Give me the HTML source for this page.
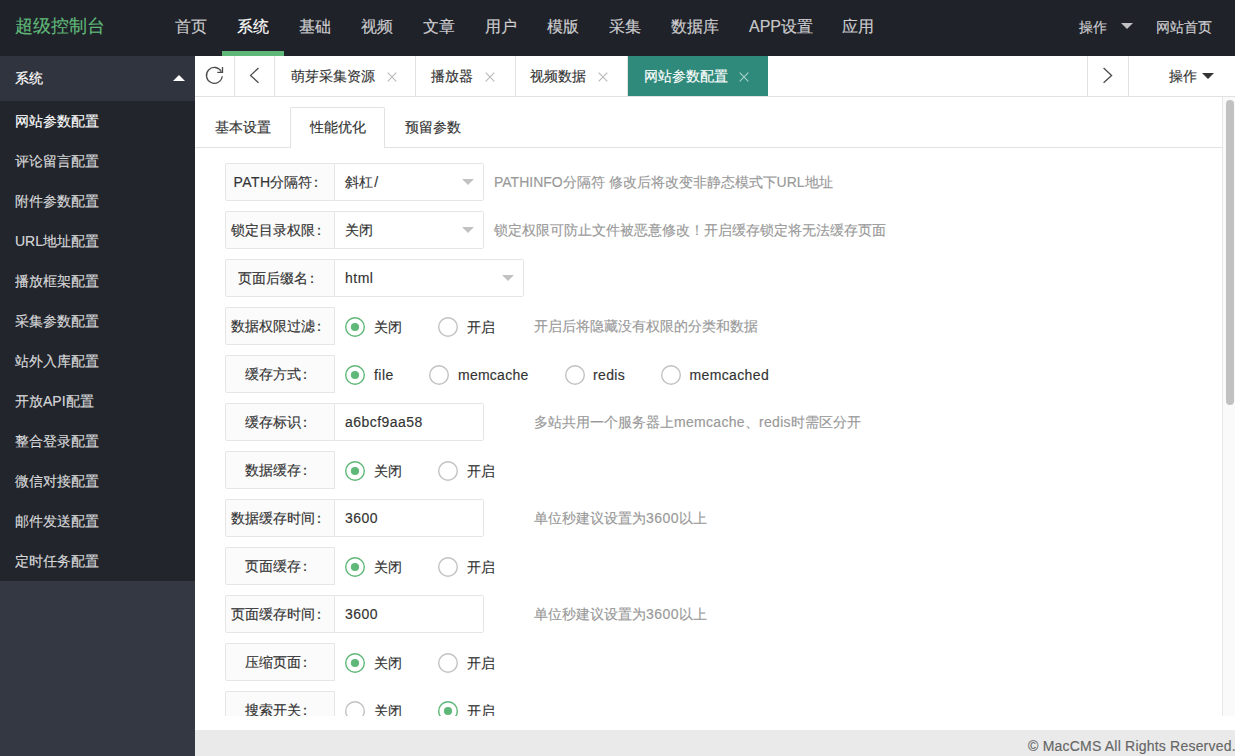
<!DOCTYPE html>
<html><head><meta charset="utf-8">
<style>
*{margin:0;padding:0;box-sizing:border-box}
html,body{width:1235px;height:756px;overflow:hidden;background:#fff;font-family:"Liberation Sans",sans-serif;font-size:14px;color:#333;-webkit-text-stroke:0.15px currentColor}
.hdr{position:absolute;left:0;top:0;width:1235px;height:56px;background:#20222a}
.logo{position:absolute;left:15px;top:0;line-height:52px;font-size:18px;color:#5fb878;white-space:nowrap}
.nav a{position:absolute;top:1px;line-height:52px;font-size:16px;color:rgba(255,255,255,.75);text-decoration:none;white-space:nowrap}
.nav a.on{color:#fff}
.nav a.sm{font-size:14px}
.navbar{position:absolute;left:222px;top:51px;width:62px;height:5px;background:#5fb878}
.htri{position:absolute;left:1121px;top:23px;width:0;height:0;border-left:6px solid transparent;border-right:6px solid transparent;border-top:6px solid rgba(255,255,255,.72)}
.side{position:absolute;left:0;top:56px;width:195px;height:700px;background:#343843}
.side .tit{position:absolute;left:0;top:0;width:195px;height:45px;background:#30343e;color:#fff;line-height:45px;padding-left:15px;font-size:14px}
.side .tit i{position:absolute;left:173px;top:19px;width:0;height:0;border-left:6px solid transparent;border-right:6px solid transparent;border-bottom:6px solid #fff}
.side .list{position:absolute;left:0;top:45px;width:195px;height:480px;background:#22252c}
.side .list div{height:40px;line-height:40px;padding-left:15px;color:rgba(255,255,255,.8);white-space:nowrap}
.side .list div.on{color:#fff}
.tabs{position:absolute;left:195px;top:56px;width:1040px;height:41px;background:#fff;border-bottom:1px solid #e2e2e2}
.tabs .b{position:absolute;top:0;height:40px;border-right:1px solid #e2e2e2}
.tabs .t{position:absolute;top:0;line-height:40px;white-space:nowrap;color:#333}
.tabs .x{position:absolute;top:0;line-height:40px;color:#c2c2c2}
.tabs svg{position:absolute}
.body{position:absolute;left:195px;top:97px;width:1040px;height:633px;background:#fff;overflow:hidden}
.frame{position:absolute;left:0;top:0;width:1040px;height:619px;overflow:hidden;background:#fff}
.ctab{position:absolute;left:0;top:10px;width:1027px;height:41px;border-bottom:1px solid #e2e2e2}
.ctab span{position:absolute;top:0;line-height:40px;white-space:nowrap;color:#333}
.ctab .act{position:absolute;left:95px;top:0;width:95px;height:41px;border:1px solid #e2e2e2;border-bottom:none;background:#fff;border-radius:2px 2px 0 0}
.lab{position:absolute;left:30px;width:110px;height:38px;border:1px solid #e6e6e6;background:#fbfbfb;border-radius:2px 0 0 2px;line-height:36px;text-align:center;white-space:nowrap;color:#333;letter-spacing:0}
.inp{position:absolute;left:139px;height:38px;border:1px solid #e6e6e6;background:#fff;border-radius:0 2px 2px 0;line-height:36px;padding-left:10px;white-space:nowrap;color:#333}
.tri{position:absolute;right:9px;top:15px;width:0;height:0;border-left:6px solid transparent;border-right:6px solid transparent;border-top:6px solid #c2c2c2}
.rad{position:absolute}
.cl{position:relative;left:-3px}
.rt{position:absolute;line-height:38px;white-space:nowrap;color:#333}
.aux{position:absolute;line-height:38px;white-space:nowrap;color:#999}
.sb{position:absolute;left:1027px;top:0;width:13px;height:619px;background:#fafafa;border-left:1px solid #e8e8e8}
.sb i{position:absolute;left:3px;top:3px;width:8px;height:305px;border-radius:4px;background:#c1c1c1}
.foot{position:absolute;left:195px;top:730px;width:1040px;height:26px;background:#eaeaea;color:#666;line-height:32px;white-space:nowrap}
</style></head><body>
<div class="hdr">
  <div class="logo">超级控制台</div>
  <div class="nav">
    <a style="left:175px">首页</a>
    <a class="on" style="left:237px">系统</a>
    <a style="left:299px">基础</a>
    <a style="left:361px">视频</a>
    <a style="left:423px">文章</a>
    <a style="left:485px">用户</a>
    <a style="left:547px">模版</a>
    <a style="left:609px">采集</a>
    <a style="left:671px">数据库</a>
    <a style="left:749px">APP设置</a>
    <a style="left:842px">应用</a>
    <a class="sm" style="left:1079px">操作</a>
    <a class="sm" style="left:1156px">网站首页</a>
  </div>
  <i class="htri"></i>
  <div class="navbar"></div>
</div>
<div class="side">
  <div class="tit">系统<i></i></div>
  <div class="list">
    <div class="on">网站参数配置</div>
    <div>评论留言配置</div>
    <div>附件参数配置</div>
    <div>URL地址配置</div>
    <div>播放框架配置</div>
    <div>采集参数配置</div>
    <div>站外入库配置</div>
    <div>开放API配置</div>
    <div>整合登录配置</div>
    <div>微信对接配置</div>
    <div>邮件发送配置</div>
    <div>定时任务配置</div>
  </div>
</div>
<div class="tabs">
  <div class="b" style="left:0;width:40px"></div>
  <svg style="left:0;top:0" width="80" height="40" viewBox="0 0 80 40"><path d="M27.2 20.2 A7.9 7.9 0 1 1 26.3 15.6" fill="none" stroke="#4a4a4a" stroke-width="1.3"/><path d="M27.5 11 V16.3 H22.3" fill="none" stroke="#4a4a4a" stroke-width="1.3"/><path d="M63.5 12 L55.6 19.4 L63.5 26.8" fill="none" stroke="#4a4a4a" stroke-width="1.3"/></svg>
  <div class="b" style="left:40px;width:40px"></div>
  <div class="b" style="left:80px;width:141px"></div>
  <span class="t" style="left:96px">萌芽采集资源</span><svg style="left:191.5px;top:16px" width="10" height="10" viewBox="0 0 10 10"><path d="M0.7 0.7 L9.3 9.3 M9.3 0.7 L0.7 9.3" stroke="#b8b8b8" stroke-width="1.1" fill="none"/></svg>
  <div class="b" style="left:221px;width:100px"></div>
  <span class="t" style="left:236px">播放器</span><svg style="left:290.2px;top:16px" width="10" height="10" viewBox="0 0 10 10"><path d="M0.7 0.7 L9.3 9.3 M9.3 0.7 L0.7 9.3" stroke="#b8b8b8" stroke-width="1.1" fill="none"/></svg>
  <div class="b" style="left:321px;width:112px"></div>
  <span class="t" style="left:335px">视频数据</span><svg style="left:403px;top:16px" width="10" height="10" viewBox="0 0 10 10"><path d="M0.7 0.7 L9.3 9.3 M9.3 0.7 L0.7 9.3" stroke="#b8b8b8" stroke-width="1.1" fill="none"/></svg>
  <div style="position:absolute;left:433px;top:0;width:140px;height:40px;background:#2f8a7b"></div>
  <span class="t" style="left:448.5px;color:#fff">网站参数配置</span><svg style="left:544px;top:16px" width="10" height="10" viewBox="0 0 10 10"><path d="M0.7 0.7 L9.3 9.3 M9.3 0.7 L0.7 9.3" stroke="#a9d3ca" stroke-width="1.1" fill="none"/></svg>
  <div class="b" style="left:892px;width:42px;border-left:1px solid #e2e2e2"></div>
  <svg style="left:900px;top:0" width="30" height="40" viewBox="900 0 30 40"><path d="M908.6 12 L916.6 19.4 L908.6 26.8" fill="none" stroke="#4a4a4a" stroke-width="1.3"/></svg>
  <span class="t" style="left:974px">操作</span>
  <i style="position:absolute;left:1007px;top:17px;width:0;height:0;border-left:6px solid transparent;border-right:6px solid transparent;border-top:6px solid #333"></i>
</div>
<div class="body">
  <div class="frame">
    <div class="ctab">
      <div class="act"></div>
      <span style="left:20px">基本设置</span>
      <span style="left:115px">性能优化</span>
      <span style="left:210px">预留参数</span>
    </div>
<div class="lab" style="top:66px"><span style="letter-spacing:.4px">PATH</span>分隔符<span class="cl">：</span></div>
<div class="inp" style="top:66px;width:150px;letter-spacing:0px">斜杠<span style="margin-left:1.2px">/</span><i class="tri"></i></div>
<span class="aux" style="top:66px;left:299px">PATHINFO分隔符 修改后将改变非静态模式下URL地址</span>
<div class="lab" style="top:114px">锁定目录权限<span class="cl">：</span></div>
<div class="inp" style="top:114px;width:150px;letter-spacing:0px">关闭<i class="tri"></i></div>
<span class="aux" style="top:114px;left:299px">锁定权限可防止文件被恶意修改！开启缓存锁定将无法缓存页面</span>
<div class="lab" style="top:162px">页面后缀名<span class="cl">：</span></div>
<div class="inp" style="top:162px;width:190px;letter-spacing:0.5px">html<i class="tri"></i></div>
<div class="lab" style="top:210px">数据权限过滤<span class="cl">：</span></div>
<svg class="rad" style="top:218.6px;left:149px" width="22" height="22" viewBox="0 0 22 22"><circle cx="11" cy="11" r="9.3" fill="none" stroke="#5fb878" stroke-width="1.4"/><circle cx="11" cy="11" r="4.1" fill="#5fb878"/></svg>
<span class="rt" style="top:211px;left:179px;letter-spacing:0px">关闭</span>
<svg class="rad" style="top:218.6px;left:242px" width="22" height="22" viewBox="0 0 22 22"><circle cx="11" cy="11" r="9.3" fill="none" stroke="#c2c2c2" stroke-width="1.4"/></svg>
<span class="rt" style="top:211px;left:272px;letter-spacing:0px">开启</span>
<span class="aux" style="top:210px;left:339px">开启后将隐藏没有权限的分类和数据</span>
<div class="lab" style="top:258px">缓存方式<span class="cl">：</span></div>
<svg class="rad" style="top:266.6px;left:149px" width="22" height="22" viewBox="0 0 22 22"><circle cx="11" cy="11" r="9.3" fill="none" stroke="#5fb878" stroke-width="1.4"/><circle cx="11" cy="11" r="4.1" fill="#5fb878"/></svg>
<span class="rt" style="top:259px;left:179px;letter-spacing:0.45px">file</span>
<svg class="rad" style="top:266.6px;left:233px" width="22" height="22" viewBox="0 0 22 22"><circle cx="11" cy="11" r="9.3" fill="none" stroke="#c2c2c2" stroke-width="1.4"/></svg>
<span class="rt" style="top:259px;left:263px;letter-spacing:0.25px">memcache</span>
<svg class="rad" style="top:266.6px;left:369px" width="22" height="22" viewBox="0 0 22 22"><circle cx="11" cy="11" r="9.3" fill="none" stroke="#c2c2c2" stroke-width="1.4"/></svg>
<span class="rt" style="top:259px;left:398px;letter-spacing:0.37px">redis</span>
<svg class="rad" style="top:266.6px;left:465px" width="22" height="22" viewBox="0 0 22 22"><circle cx="11" cy="11" r="9.3" fill="none" stroke="#c2c2c2" stroke-width="1.4"/></svg>
<span class="rt" style="top:259px;left:494.5px;letter-spacing:0.37px">memcached</span>
<div class="lab" style="top:306px">缓存标识<span class="cl">：</span></div>
<div class="inp" style="top:306px;width:150px;letter-spacing:0.47px">a6bcf9aa58</div>
<span class="aux" style="top:306px;left:339px">多站共用一个服务器上<span style="letter-spacing:.3px">memcache</span>、<span style="letter-spacing:.35px">redis</span>时需区分开</span>
<div class="lab" style="top:354px">数据缓存<span class="cl">：</span></div>
<svg class="rad" style="top:362.6px;left:149px" width="22" height="22" viewBox="0 0 22 22"><circle cx="11" cy="11" r="9.3" fill="none" stroke="#5fb878" stroke-width="1.4"/><circle cx="11" cy="11" r="4.1" fill="#5fb878"/></svg>
<span class="rt" style="top:355px;left:179px;letter-spacing:0px">关闭</span>
<svg class="rad" style="top:362.6px;left:242px" width="22" height="22" viewBox="0 0 22 22"><circle cx="11" cy="11" r="9.3" fill="none" stroke="#c2c2c2" stroke-width="1.4"/></svg>
<span class="rt" style="top:355px;left:272px;letter-spacing:0px">开启</span>
<div class="lab" style="top:402px">数据缓存时间<span class="cl">：</span></div>
<div class="inp" style="top:402px;width:150px;letter-spacing:0.47px">3600</div>
<span class="aux" style="top:402px;left:339px">单位秒建议设置为<span style="letter-spacing:.5px">3600</span>以上</span>
<div class="lab" style="top:450px">页面缓存<span class="cl">：</span></div>
<svg class="rad" style="top:458.6px;left:149px" width="22" height="22" viewBox="0 0 22 22"><circle cx="11" cy="11" r="9.3" fill="none" stroke="#5fb878" stroke-width="1.4"/><circle cx="11" cy="11" r="4.1" fill="#5fb878"/></svg>
<span class="rt" style="top:451px;left:179px;letter-spacing:0px">关闭</span>
<svg class="rad" style="top:458.6px;left:242px" width="22" height="22" viewBox="0 0 22 22"><circle cx="11" cy="11" r="9.3" fill="none" stroke="#c2c2c2" stroke-width="1.4"/></svg>
<span class="rt" style="top:451px;left:272px;letter-spacing:0px">开启</span>
<div class="lab" style="top:498px">页面缓存时间<span class="cl">：</span></div>
<div class="inp" style="top:498px;width:150px;letter-spacing:0.47px">3600</div>
<span class="aux" style="top:498px;left:339px">单位秒建议设置为<span style="letter-spacing:.5px">3600</span>以上</span>
<div class="lab" style="top:546px">压缩页面<span class="cl">：</span></div>
<svg class="rad" style="top:554.6px;left:149px" width="22" height="22" viewBox="0 0 22 22"><circle cx="11" cy="11" r="9.3" fill="none" stroke="#5fb878" stroke-width="1.4"/><circle cx="11" cy="11" r="4.1" fill="#5fb878"/></svg>
<span class="rt" style="top:547px;left:179px;letter-spacing:0px">关闭</span>
<svg class="rad" style="top:554.6px;left:242px" width="22" height="22" viewBox="0 0 22 22"><circle cx="11" cy="11" r="9.3" fill="none" stroke="#c2c2c2" stroke-width="1.4"/></svg>
<span class="rt" style="top:547px;left:272px;letter-spacing:0px">开启</span>
<div class="lab" style="top:594px">搜索开关<span class="cl">：</span></div>
<svg class="rad" style="top:602.6px;left:149px" width="22" height="22" viewBox="0 0 22 22"><circle cx="11" cy="11" r="9.3" fill="none" stroke="#c2c2c2" stroke-width="1.4"/></svg>
<span class="rt" style="top:595px;left:179px;letter-spacing:0px">关闭</span>
<svg class="rad" style="top:602.6px;left:242px" width="22" height="22" viewBox="0 0 22 22"><circle cx="11" cy="11" r="9.3" fill="none" stroke="#5fb878" stroke-width="1.4"/><circle cx="11" cy="11" r="4.1" fill="#5fb878"/></svg>
<span class="rt" style="top:595px;left:272px;letter-spacing:0px">开启</span>
    <div class="sb"><i></i></div>
  </div>
</div>
<div class="foot"><span style="position:absolute;left:833px;letter-spacing:0.21px">© MacCMS All Rights Reserved.</span></div>
</body></html>
